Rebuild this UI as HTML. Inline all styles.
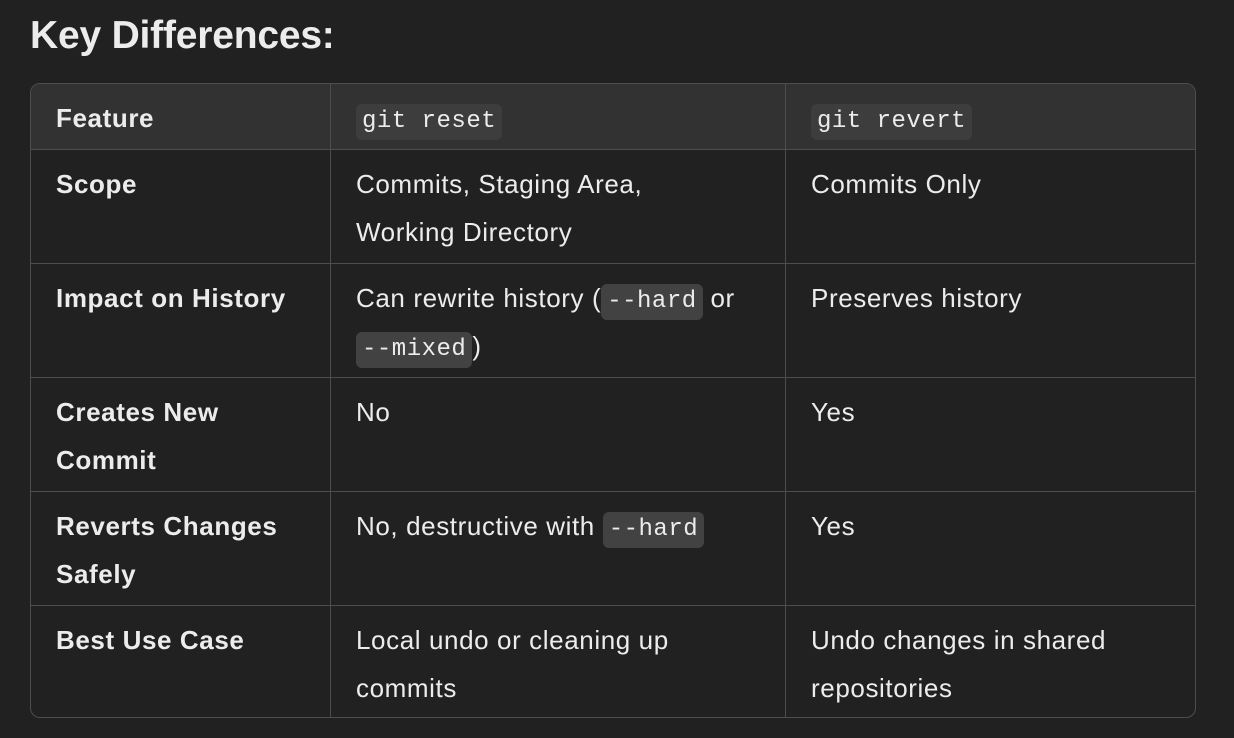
<!DOCTYPE html>
<html><head><style>
html,body{margin:0;background:#212121;width:1234px;height:738px;overflow:hidden}
body{font-family:"Liberation Sans",sans-serif;color:#ececec}
h2{position:absolute;left:30px;top:12px;margin:0;font-size:39px;font-weight:bold;line-height:48px;letter-spacing:-0.2px}
.tw{position:absolute;left:30px;top:83px;width:1164px;height:633px;border:1px solid #4d4d4d;border-radius:10px;overflow:hidden}
table{border-collapse:collapse;width:1166px;margin:-1px;table-layout:fixed}
td,th{border:1px solid #4d4d4d;padding:0 10px 0 25px;font-size:26px;letter-spacing:0.6px;vertical-align:top;text-align:left;font-weight:normal;white-space:nowrap}
td div,th div{height:113px;padding-top:10px;box-sizing:border-box;line-height:48px}
th div{height:65px}
th{background:#323232;font-weight:bold}
td:first-child{font-weight:bold}
code{font-family:"Liberation Mono",monospace;font-size:24px;letter-spacing:0.5px;line-height:1;background:#424242;border-radius:6px;padding:6px 6px;display:inline-block}
th code{background:#3d3d3d}
</style></head><body>
<h2>Key Differences:</h2>
<div class="tw"><table>
<colgroup><col style="width:300px"><col style="width:455px"><col style="width:411px"></colgroup>
<tr><th><div>Feature</div></th><th style="font-weight:normal"><div><code>git reset</code></div></th><th style="font-weight:normal"><div><code>git revert</code></div></th></tr>
<tr><td><div>Scope</div></td><td><div>Commits, Staging Area,<br>Working Directory</div></td><td><div>Commits Only</div></td></tr>
<tr><td><div>Impact on History</div></td><td><div>Can rewrite history (<code>--hard</code> or<br><code>--mixed</code>)</div></td><td><div>Preserves history</div></td></tr>
<tr><td><div>Creates New<br>Commit</div></td><td><div>No</div></td><td><div>Yes</div></td></tr>
<tr><td><div>Reverts Changes<br>Safely</div></td><td><div>No, destructive with <code>--hard</code></div></td><td><div>Yes</div></td></tr>
<tr><td><div>Best Use Case</div></td><td><div>Local undo or cleaning up<br>commits</div></td><td><div>Undo changes in shared<br>repositories</div></td></tr>
</table></div>
</body></html>
